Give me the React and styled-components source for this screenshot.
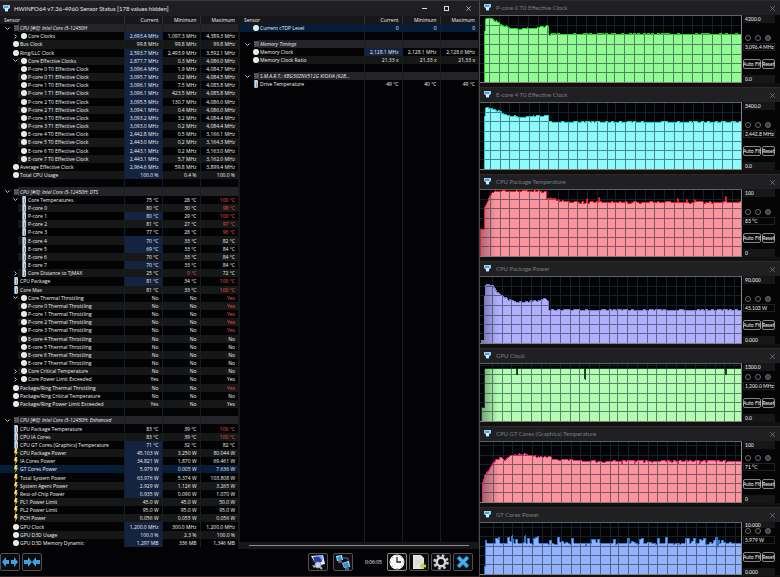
import React from 'react';
import styled, { createGlobalStyle, css } from 'styled-components';

const GlobalStyle = createGlobalStyle`
  * { box-sizing: border-box; }
  body {
    margin: 0;
    background: #0c0a0b;
    color: #f0f0f0;
    font-family: "Open Sans", "Noto Sans", sans-serif;
    font-size: 5px;
    line-height: 8px;
  }
  button, input {
    font: inherit;
    color: inherit;
    margin: 0;
    padding: 0;
  }
`;

/* ---------- data ---------- */

// [kind, level, name, current, minimum, maximum, flags]
// flags: h = changed value, r = red minimum, R = red maximum, s = selected, v / > = tree arrow
const leftRows = [
  ['group', 0, 'CPU [#0]: Intel Core i5-12450H', '', '', '', 'v'],
  ['clock', 1, 'Core Clocks', '2,693.4 MHz', '1,097.3 MHz', '4,389.3 MHz', 'h>'],
  ['clock', 0, 'Bus Clock', '99.8 MHz', '99.8 MHz', '99.8 MHz', ''],
  ['clock', 0, 'Ring/LLC Clock', '2,593.7 MHz', '2,493.9 MHz', '3,592.1 MHz', 'h'],
  ['clock', 1, 'Core Effective Clocks', '2,877.7 MHz', '0.3 MHz', '4,086.0 MHz', 'hv'],
  ['clock', 1, 'P-core 0 T0 Effective Clock', '3,096.4 MHz', '1.9 MHz', '4,084.7 MHz', 'h'],
  ['clock', 1, 'P-core 0 T1 Effective Clock', '3,095.7 MHz', '0.2 MHz', '4,084.5 MHz', 'h'],
  ['clock', 1, 'P-core 1 T0 Effective Clock', '3,096.1 MHz', '7.5 MHz', '4,085.8 MHz', 'h'],
  ['clock', 1, 'P-core 1 T1 Effective Clock', '3,096.1 MHz', '423.5 MHz', '4,085.8 MHz', 'h'],
  ['clock', 1, 'P-core 2 T0 Effective Clock', '3,095.5 MHz', '130.7 MHz', '4,086.0 MHz', 'h'],
  ['clock', 1, 'P-core 2 T1 Effective Clock', '3,094.1 MHz', '0.4 MHz', '4,086.0 MHz', 'h'],
  ['clock', 1, 'P-core 3 T0 Effective Clock', '3,093.2 MHz', '3.2 MHz', '4,084.4 MHz', 'h'],
  ['clock', 1, 'P-core 3 T1 Effective Clock', '3,093.0 MHz', '0.2 MHz', '4,084.4 MHz', 'h'],
  ['clock', 1, 'E-core 4 T0 Effective Clock', '2,442.8 MHz', '0.5 MHz', '3,166.1 MHz', 'h'],
  ['clock', 1, 'E-core 5 T0 Effective Clock', '2,443.0 MHz', '0.2 MHz', '3,164.3 MHz', 'h'],
  ['clock', 1, 'E-core 6 T0 Effective Clock', '2,443.1 MHz', '0.2 MHz', '3,163.0 MHz', 'h'],
  ['clock', 1, 'E-core 7 T0 Effective Clock', '2,443.1 MHz', '5.7 MHz', '3,162.0 MHz', 'h'],
  ['clock', 0, 'Average Effective Clock', '2,964.6 MHz', '59.8 MHz', '3,899.4 MHz', 'h'],
  ['clock', 0, 'Total CPU Usage', '100.0 %', '0.4 %', '100.0 %', 'h'],
  ['blank'],
  ['group', 0, 'CPU [#0]: Intel Core i5-12450H: DTS', '', '', '', 'v'],
  ['temp', 1, 'Core Temperatures', '75 °C', '28 °C', '100 °C', 'Rv'],
  ['temp', 1, 'P-core 0', '80 °C', '30 °C', '98 °C', 'R'],
  ['temp', 1, 'P-core 1', '80 °C', '29 °C', '100 °C', 'hR'],
  ['temp', 1, 'P-core 2', '81 °C', '27 °C', '97 °C', 'R'],
  ['temp', 1, 'P-core 3', '77 °C', '28 °C', '96 °C', 'R'],
  ['temp', 1, 'E-core 4', '70 °C', '33 °C', '82 °C', 'h'],
  ['temp', 1, 'E-core 5', '69 °C', '33 °C', '84 °C', 'h'],
  ['temp', 1, 'E-core 6', '70 °C', '33 °C', '84 °C', ''],
  ['temp', 1, 'E-core 7', '70 °C', '33 °C', '84 °C', 'h'],
  ['temp', 1, 'Core Distance to TjMAX', '25 °C', '0 °C', '72 °C', 'r>'],
  ['temp', 0, 'CPU Package', '81 °C', '34 °C', '100 °C', 'hR'],
  ['temp', 0, 'Core Max', '81 °C', '33 °C', '100 °C', 'R'],
  ['clock', 1, 'Core Thermal Throttling', 'No', 'No', 'Yes', 'Rv'],
  ['clock', 1, 'P-core 0 Thermal Throttling', 'No', 'No', 'Yes', 'R'],
  ['clock', 1, 'P-core 1 Thermal Throttling', 'No', 'No', 'Yes', 'R'],
  ['clock', 1, 'P-core 2 Thermal Throttling', 'No', 'No', 'Yes', 'R'],
  ['clock', 1, 'P-core 3 Thermal Throttling', 'No', 'No', 'Yes', 'R'],
  ['clock', 1, 'E-core 4 Thermal Throttling', 'No', 'No', 'No', ''],
  ['clock', 1, 'E-core 5 Thermal Throttling', 'No', 'No', 'No', ''],
  ['clock', 1, 'E-core 6 Thermal Throttling', 'No', 'No', 'No', ''],
  ['clock', 1, 'E-core 7 Thermal Throttling', 'No', 'No', 'No', ''],
  ['clock', 1, 'Core Critical Temperature', 'No', 'No', 'No', '>'],
  ['clock', 1, 'Core Power Limit Exceeded', 'Yes', 'No', 'Yes', '>'],
  ['clock', 0, 'Package/Ring Thermal Throttling', 'No', 'No', 'Yes', 'R'],
  ['clock', 0, 'Package/Ring Critical Temperature', 'No', 'No', 'No', ''],
  ['clock', 0, 'Package/Ring Power Limit Exceeded', 'Yes', 'No', 'Yes', ''],
  ['blank'],
  ['group', 0, 'CPU [#0]: Intel Core i5-12450H: Enhanced', '', '', '', 'v'],
  ['temp', 0, 'CPU Package Temperature', '83 °C', '39 °C', '100 °C', 'R'],
  ['temp', 0, 'CPU IA Cores', '83 °C', '39 °C', '100 °C', 'R'],
  ['temp', 0, 'CPU GT Cores (Graphics) Temperature', '71 °C', '32 °C', '82 °C', 'h'],
  ['power', 0, 'CPU Package Power', '45.103 W', '3.250 W', '80.044 W', 'h'],
  ['power', 0, 'IA Cores Power', '34.821 W', '1.870 W', '69.461 W', 'h'],
  ['power', 0, 'GT Cores Power', '5.979 W', '0.005 W', '7.636 W', 'hs'],
  ['power', 0, 'Total System Power', '63.976 W', '5.374 W', '103.808 W', 'h'],
  ['power', 0, 'System Agent Power', '2.929 W', '1.126 W', '3.265 W', 'h'],
  ['power', 0, 'Rest-of-Chip Power', '0.935 W', '0.090 W', '1.070 W', 'h'],
  ['power', 0, 'PL1 Power Limit', '45.0 W', '45.0 W', '50.0 W', ''],
  ['power', 0, 'PL2 Power Limit', '95.0 W', '95.0 W', '95.0 W', ''],
  ['power', 0, 'PCH Power', '0.056 W', '0.055 W', '0.056 W', ''],
  ['clock', 0, 'GPU Clock', '1,200.0 MHz', '300.0 MHz', '1,200.0 MHz', 'h'],
  ['clock', 0, 'GPU D3D Usage', '100.0 %', '2.3 %', '100.0 %', 'h'],
  ['clock', 0, 'GPU D3D Memory Dynamic', '1,297 MB', '336 MB', '1,346 MB', 'h'],
];

const rightRows = [
  ['clock', 0, 'Current cTDP Level', '0', '0', '0', 's'],
  ['blank'],
  ['group', 0, 'Memory Timings', '', '', '', 'v'],
  ['clock', 0, 'Memory Clock', '2,128.1 MHz', '2,128.1 MHz', '2,128.6 MHz', 'h'],
  ['clock', 0, 'Memory Clock Ratio', '21.33 x', '21.33 x', '21.33 x', ''],
  ['blank'],
  ['group', 0, 'S.M.A.R.T.: KBG50ZNV512G KIOXIA (92B...', '', '', '', 'v'],
  ['temp', 0, 'Drive Temperature', '49 °C', '40 °C', '49 °C', ''],
];

// points are [x, y from the top], straight lines in between
const graphs = [
  {
    title: 'P-core 0 T0 Effective Clock', max: '4200.0', now: '3,096.4 MHz', min: '0.0',
    size: 87, height: 68, grid: 9, fill: '#92fb92', line: '#1fd81f', start: 5, noise: 1, up: 1,
    points: [[5, 15], [6, 3], [12, 3], [18, 8], [25, 11], [31, 13], [41, 14], [51, 13], [61, 12], [68, 11], [69, 20], [71, 19], [262, 19]],
  },
  {
    title: 'E-core 4 T0 Effective Clock', max: '3400.0', now: '2,442.8 MHz', min: '0.0',
    size: 87, height: 68, grid: 10, fill: '#8dfbfb', line: '#22cfcf', start: 5, noise: 1, up: 1,
    points: [[5, 13], [6, 5], [12, 6], [18, 9], [25, 12], [31, 14], [44, 15], [60, 14], [68, 14], [69, 20], [262, 20]],
  },
  {
    title: 'CPU Package Temperature', max: '100', now: '83 °C', min: '0',
    size: 87, height: 68, grid: 10, fill: '#fc939d', line: '#ee1d2b', start: 0, noise: 2, up: 1, fade: true,
    points: [[0, 41], [4, 41], [5, 17], [7, 13], [9, 8], [12, 3], [15, 2], [66, 2], [67, 9], [75, 10], [80, 12], [87, 13], [262, 13]],
    marks: [[107, 9], [119, 8], [198, 9], [207, 10], [215, 10], [246, 7]],
  },
  {
    title: 'CPU Package Power', max: '90.000', now: '45.103 W', min: '0.000',
    size: 87, height: 68, grid: 12, fill: '#b1affd', line: '#7a78cf', start: 2, noise: 1, up: 1, fade: true,
    points: [[2, 65], [4, 65], [5, 20], [6, 8], [13, 9], [15, 13], [18, 17], [23, 20], [28, 24], [38, 26], [45, 26], [56, 25], [66, 23], [68, 25], [69, 34], [262, 34]],
  },
  {
    title: 'GPU Clock', max: '1300.0', now: '1,200.0 MHz', min: '0.0',
    size: 78, height: 59, grid: 12, fill: '#b2fdb0', line: '#1c3f22', start: 2, noise: 0, up: 0, fade: true,
    points: [[2, 45], [4, 45], [5, 5], [262, 5]],
    marks: [[37, 11], [105, 16], [246, 11]],
  },
  {
    title: 'CPU GT Cores (Graphics) Temperature', max: '100', now: '71 °C', min: '0',
    size: 81, height: 62, grid: 13, fill: '#fc939d', line: '#e2247a', start: 3, noise: 2, up: 1, fade: true,
    points: [[3, 41], [5, 34], [8, 30], [10, 27], [13, 22], [16, 19], [20, 17], [26, 18], [30, 14], [46, 13], [50, 14], [62, 16], [70, 16], [74, 19], [90, 19], [96, 20], [262, 20]],
    marks: [[142, 23], [155, 22], [198, 23], [220, 23]],
  },
  {
    title: 'GT Cores Power', max: '10.000', now: '5.979 W', min: '0.000',
    size: 70, height: 53, grid: 13, fill: '#94b1fb', line: '#2b7ed6', start: 5, noise: 6, up: 6,
    points: [[5, 45], [6, 18], [7, 21], [262, 21]],
    marks: [[19, 15], [32, 13], [45, 13], [58, 14], [106, 24], [238, 25]],
  },
];

/* ---------- window ---------- */

const Desktop = styled.div`
  display: grid;
  grid-template-columns: 480fr 300fr;
  height: 100vh;
  overflow: hidden;
`;

const MainWindow = styled.main`
  display: flex;
  flex-direction: column;
  min-width: 0;
  min-height: 0;
  background: #030306;
  border-top: 1px solid #3b3837;
  border-right: 1px solid #4b4948;
  border-bottom: 1px solid #3a2120;
`;

const TitleBar = styled.header`
  display: flex;
  align-items: center;
  height: 15px;
  padding-left: 3px;
  background: #1f1f23;
  color: #e6e6e6;
`;

const Title = styled.h1`
  flex: 1;
  margin: 0 0 0 3px;
  font-family: Lato, "Open Sans", sans-serif;
  font-size: 6px;
  font-weight: 400;
  white-space: nowrap;
`;

const GraphTitle = styled(Title)`
  margin-left: 4px;
`;

const WindowButton = styled.button`
  display: flex;
  align-items: center;
  justify-content: center;
  width: ${p => (p.$small ? '16px' : '22px')};
  height: 14px;
  border: 0;
  background: none;
  color: ${p => (p.$small ? '#8a8a8e' : '#dcdcdc')};
`;

const Panels = styled.div`
  display: flex;
  flex: 1;
  min-height: 0;
`;

const Panel = styled.section`
  flex: 1;
  display: flex;
  flex-direction: column;
  min-width: 0;
  border-right: ${p => (p.$tree ? '2px' : '1px')} solid #17181b;
  padding-bottom: ${p => (p.$tree ? '2px' : '0')};
`;

const SensorTable = styled.table`
  width: 100%;
  flex: 1;
  height: 100%;
  table-layout: fixed;
  border-collapse: collapse;
`;

const NumberCol = styled.col`
  width: 38px;
`;

const HeadCell = styled.th`
  height: 8px;
  padding: 0 3px;
  background: #17171a;
  border-left: 1px solid #2a3036;
  font-weight: 400;
  line-height: 8px;
  text-align: right;
  &:first-child {
    border-left: 0;
    padding-left: 4px;
    text-align: left;
  }
`;

const Cell = styled.td`
  height: 8px;
  padding: 0 3px 0 0;
  border-left: 1px solid #131e27;
  line-height: 8px;
  text-align: right;
  white-space: nowrap;
  color: ${p => (p.$red ? '#f0544b' : 'inherit')};
  background: ${p => (p.$hot ? '#14233f' : 'none')};
  &:first-child {
    border-left: 0;
    padding: 0;
  }
`;

const Row = styled.tr`
  ${p => p.$alt && css`background: linear-gradient(90deg, #030306 18px, #161817 18px);`}
  ${p => p.$group && css`background: linear-gradient(90deg, #030306 18px, #232328 18px);`}
  ${p => p.$selected && css`background: #061d38;`}
`;

const FillerRow = styled.tr`
  height: 100%;
`;

const Name = styled.div`
  display: flex;
  align-items: center;
  height: 8px;
  padding-left: ${p => (p.$level ? '11px' : '3px')};
  font-style: ${p => (p.$group ? 'italic' : 'normal')};
  overflow: hidden;
`;

const Slot = styled.span`
  display: flex;
  flex: none;
  justify-content: center;
  width: ${p => (p.$wide ? '9px' : '8px')};
`;

const TreeButton = styled.button`
  display: flex;
  align-items: center;
  justify-content: center;
  width: 8px;
  height: 8px;
  border: 0;
  background: none;
`;

const ScrollBar = styled.div`
  height: 7px;
  padding: 3px 9px;
  background: #17181a;
`;

const ScrollThumb = styled.div`
  height: 1px;
  background: #8b8b8b;
`;

const Toolbar = styled.footer`
  display: flex;
  align-items: center;
  gap: 2px;
  height: 27px;
  padding: 0 6px 2px 0;
  background: #030306;
`;

const ToolButton = styled.button`
  display: flex;
  align-items: center;
  justify-content: center;
  width: 20px;
  height: 18px;
  border: 1px solid ${p => (p.$light ? '#8a8a8a' : '#515153')};
  border-radius: 2px;
  background: #0c0c0e;
`;

const Elapsed = styled.time`
  min-width: 20px;
  margin-left: 10px;
`;

const Spacer = styled.span`
  flex: ${p => (p.$grow ? '1' : '0 0 1px')};
`;

/* ---------- graph windows ---------- */

const GraphStack = styled.div`
  display: grid;
  grid-template-rows: ${graphs.map(g => `minmax(0, ${g.size}fr)`).join(' ')};
  min-width: 0;
  min-height: 0;
`;

const GraphWindow = styled.section`
  display: flex;
  flex-direction: column;
  min-height: 0;
  padding-bottom: ${p => (p.$last ? '2px' : '4px')};
  background: #15100f;
`;

const GraphTitleBar = styled(TitleBar)`
  flex: none;
  padding-left: 4px;
  border-top: 1px solid #2b2b2e;
  background: #202023;
  color: #7b7c80;
`;

const GraphBody = styled.div`
  display: flex;
  flex: 1;
  min-height: 0;
  background: #050506;
`;

const Plot = styled.svg`
  display: block;
  flex: 1;
  min-width: 0;
  height: 100%;
  border-top: 1px solid #5d6265;
  border-right: 1px solid #85898a;
  border-bottom: 1px solid #7c8082;
`;

const Controls = styled.div`
  display: flex;
  flex-direction: column;
  width: 38px;
  padding: 0 5px 0 1px;
  font-family: Lato, "Open Sans", sans-serif;
`;

const Scale = styled.input`
  width: 100%;
  height: 8px;
  min-height: 6px;
  flex-shrink: ${p => (p.$top ? '1' : '0')};
  margin-bottom: ${p => (p.$top ? 'auto' : '0')};
  padding-left: 2px;
  border: 0;
  background: #161718;
  line-height: 8px;
`;

const Reading = styled.output`
  flex: none;
  height: 8px;
  margin: 2px 0 8px;
  padding-left: 1px;
  border: 1px solid #222226;
  line-height: 6px;
  white-space: nowrap;
`;

const Colours = styled.div`
  display: flex;
  flex: none;
  gap: 4px;
  padding-left: 2px;
`;

const Dot = styled.input`
  appearance: none;
  width: 6px;
  height: 6px;
  border: 1px solid #66686b;
  border-radius: 50%;
  background: ${p => (p.$on ? '#2f4260' : 'none')};
`;

const Buttons = styled.div`
  display: flex;
  flex: none;
  gap: 1px;
  margin-bottom: 6px;
`;

const SmallButton = styled.button`
  flex: ${p => (p.$wide ? '18' : '13')} 0 0;
  min-width: 0;
  height: 10px;
  border: 1px solid #858588;
  border-radius: 2px;
  background: #0b0b0c;
  line-height: 8px;
  white-space: nowrap;
  display: flex;
  justify-content: center;
`;

/* ---------- icons ---------- */

const AppIcon = () => (
  <svg width="8" height="8" viewBox="0 0 8 8" aria-hidden="true">
    <path d="M0 0h7v3L5 4.500H2L0 3z" fill="#9bd0ee" />
    <rect x="1" y="1" width="4" height="2" fill="#4b9fd6" />
    <rect x="2" y="3" width="3" height="4" fill="#dfeaf1" />
    <rect x="2" y="6" width="3" height="1" fill="#2d80bd" />
  </svg>
);

const Chevron = ({ open }) => (
  <svg width="5" height="5" viewBox="0 0 5 5" fill="none" stroke="#c4c4c4" aria-hidden="true">
    <path d={open ? 'M.5 1.5 2.5 3.5 4.5 1.5' : 'M1.5 .5 3.5 2.5 1.5 4.5'} />
  </svg>
);

const icons = {
  group: (
    <svg width="6" height="8" viewBox="0 0 6 8">
      <rect x="1" y="1" width="5" height="6" fill="#4a4a4a" />
      <path d="M1 2.5h5M1 4.5h5" stroke="#6b6b6b" strokeWidth=".7" />
    </svg>
  ),
  clock: (
    <svg width="6" height="8" viewBox="0 0 6 8">
      <circle cx="3" cy="4" r="3" fill="#efefec" />
      <path d="M3 3v1.300h1" stroke="#c4c4c0" strokeWidth=".6" fill="none" />
    </svg>
  ),
  temp: (
    <svg width="6" height="8" viewBox="0 0 6 8">
      <rect x="1" y="0" width="4" height="8" rx="1.400" fill="#c3dcea" />
      <path d="M3.500 2.500v4.500" stroke="#d07a62" />
      <path d="M1.500 1v6" stroke="#6ca8d0" />
    </svg>
  ),
  power: (
    <svg width="6" height="8" viewBox="0 0 6 8">
      <path d="M2 0h2.6L3.7 2.8H5L2 8l.6-3.7H1z" fill="#f5c93c" />
      <path d="M2.4 .4h1L2.5 3.6H1.6z" fill="#fff0a6" />
    </svg>
  ),
};

const CloseIcon = () => (
  <svg width="5" height="5" viewBox="0 0 5 5" stroke="currentColor" strokeWidth=".7" aria-hidden="true">
    <path d="M.3.3l4.4 4.4M4.7.3.3 4.7" />
  </svg>
);

const Arrows = ({ inward }) => (
  <svg width="18" height="10" viewBox="0 0 18 10" fill="#3f9fe2" aria-hidden="true">
    {inward ? (
      <path d="M1 3h4V0l4 5-4 5V7H1zM17 3h-4V0L9 5l4 5V7h4z" />
    ) : (
      <path d="M1 5l4-5v3h3v4H5v3zM17 5l-4-5v3h-3v4h3v3z" />
    )}
  </svg>
);

const toolIcons = {
  'Sensor settings': (
    <svg width="16" height="16" viewBox="0 0 16 16">
      <path d="M1 2l12-1 2 9-8 2z" fill="#e6ebf3" />
      <path d="M3 3l8-1 1 6-7 1z" fill="#243cae" />
      <path d="M8 2l4-1 1 6z" fill="#7f9af2" />
      <circle cx="8" cy="11" r="3" fill="#ccd3df" stroke="#99a3b4" />
      <path d="M10 13l2 2" stroke="#a7afba" strokeWidth="2" />
      <path d="M2 11l4 1-2 2z" fill="#b9bdc6" />
    </svg>
  ),
  'Remote monitoring': (
    <svg width="16" height="16" viewBox="0 0 16 16">
      <path d="M8 4h5v4" stroke="#6b7278" fill="none" />
      <path d="M1 2l6-1 1 5-6 1z" fill="#bfe2f6" />
      <path d="M2 3l4-1 1 4-4 .5z" fill="#2a93dd" />
      <path d="M7 9l7-2 1 6-6 1z" fill="#bfe2f6" />
      <path d="M8 9.500l5-1.500 1 5-5 .5z" fill="#2a93dd" />
      <path d="M3 8h4M10 15h4" stroke="#9fb6c4" />
    </svg>
  ),
  'Reset clock': (
    <svg width="16" height="16" viewBox="0 0 16 16">
      <circle cx="8" cy="8" r="7.5" fill="#f6f6f4" />
      <path d="M8 3v5h4" stroke="#222" strokeWidth="1.3" fill="none" />
      <path d="M8 1v1M8 14v1M1 8h1M14 8h1M3 3l.7.7M13 3l-.7.7M3 13l.7-.7M13 13l-.7-.7" stroke="#777" />
    </svg>
  ),
  'Start logging': (
    <svg width="16" height="16" viewBox="0 0 16 16">
      <path d="M2 1h8l3 3v11H2z" fill="#e3e4e2" />
      <path d="M4 4h5M4 6h7M4 8h7M4 10h5" stroke="#d0d1cf" strokeWidth=".6" />
      <path d="M12 9v6M9 12h6" stroke="#b4d65a" strokeWidth="2.400" />
    </svg>
  ),
  Settings: (
    <svg width="16" height="16" viewBox="0 0 16 16">
      <circle cx="8" cy="8" r="6.3" fill="none" stroke="#c6cace" strokeWidth="3" strokeDasharray="2.5 2.45" />
      <circle cx="8" cy="8" r="4.200" fill="none" stroke="#d2d5d8" strokeWidth="2.500" />
    </svg>
  ),
  Close: (
    <svg width="16" height="16" viewBox="0 0 16 16">
      <path d="M3 3l10 10M13 3L3 13" stroke="#2474ad" strokeWidth="4" />
      <path d="M3.500 3.500l9 9M12.500 3.500l-9 9" stroke="#45aee9" strokeWidth="2.600" />
    </svg>
  ),
};

/* ---------- parts ---------- */

function SensorRow({ row, index }) {
  const [kind, level, name, current, minimum, maximum, flags = ''] = row;
  if (kind === 'blank') {
    return <Row><Cell /><Cell /><Cell /><Cell /></Row>;
  }
  const open = flags.includes('v');
  const selected = flags.includes('s');
  return (
    <Row $alt={index % 2 === 0} $group={kind === 'group'} $selected={selected}>
      <Cell>
        <Name $level={level} $group={kind === 'group'}>
          <Slot>
            {(open || flags.includes('>')) && (
              <TreeButton aria-expanded={open} aria-label={name}><Chevron open={open} /></TreeButton>
            )}
          </Slot>
          <Slot $wide>{icons[kind]}</Slot>
          {name}
        </Name>
      </Cell>
      <Cell $hot={flags.includes('h')}>{current}</Cell>
      <Cell $red={flags.includes('r')}>{minimum}</Cell>
      <Cell $red={flags.includes('R')}>{maximum}</Cell>
    </Row>
  );
}

function Sensors({ rows, filler }) {
  return (
    <SensorTable>
      <colgroup>
        <col />
        <NumberCol /><NumberCol /><NumberCol />
      </colgroup>
      <thead>
        <tr>
          <HeadCell>Sensor</HeadCell>
          <HeadCell>Current</HeadCell>
          <HeadCell>Minimum</HeadCell>
          <HeadCell>Maximum</HeadCell>
        </tr>
      </thead>
      <tbody>
        {rows.map((row, i) => <SensorRow key={i} row={row} index={i} />)}
        {filler && <FillerRow><Cell /><Cell /><Cell /><Cell /></FillerRow>}
      </tbody>
    </SensorTable>
  );
}

// one height for every pixel column, the wobble repeats the same on each load
function buildSeries({ points, start, noise, up, marks = [] }, seed) {
  let s = seed * 7919 + 13;
  const random = () => {
    s = (s * 1103515245 + 12345) % 2147483648;
    return s / 2147483648;
  };
  const series = [];
  let wobble = 0;
  for (let x = start; x < 262; x++) {
    const n = points.findIndex(p => p[0] > x);
    const [x0, y0] = points[n - 1] || points[0];
    const [x1, y1] = points[n] || points[points.length - 1];
    if (x % 2 === 0) {
      const r = random();
      wobble = r > 0.62 ? -Math.ceil(random() * up) : 0;
      if (noise > 1 && r < 0.1) wobble = 1;
    }
    const flat = x > 14 ? wobble : 0;
    const mark = marks.find(m => m[0] === x);
    series.push([x, mark ? mark[1] : Math.round(y0 + ((y1 - y0) * (x - x0)) / (x1 - x0)) + flat]);
  }
  return series;
}

function Graph({ graph, seed }) {
  const { height, fill, line, start, grid, fade } = graph;
  const top = buildSeries(graph, seed).map(([x, y]) => `L${x} ${Math.max(1, y)}H${x + 1}`).join('');
  const area = `M${start} ${height}${top}V${height}Z`;
  let lines = '';
  for (let x = grid; x < 262; x += 9.72) lines += `M${Math.round(x)} 0h1v${height}h-1z`;
  for (let y = height - 10; y > 0; y -= 9.7) lines += `M0 ${Math.round(y)}h262v1h-262z`;
  const id = `g${seed}`;
  return (
    <Plot viewBox={`0 0 262 ${height}`} preserveAspectRatio="none" shapeRendering="crispEdges" role="img" aria-label={graph.title}>
      <defs>
        <clipPath id={id}><path d={area} /></clipPath>
        <linearGradient id={`${id}f`}>
          <stop offset="0" stopColor="#20202c" stopOpacity=".4" />
          <stop offset="1" stopColor="#20202c" stopOpacity="0" />
        </linearGradient>
      </defs>
      <rect width="262" height={height} fill="#030306" />
      <path d={lines} fill="#10212b" />
      <path d={area} fill={fill} />
      {fade && <rect x={start} width="16" height={height} fill={`url(#${id}f)`} clipPath={`url(#${id})`} />}
      <path d={lines} fill="#263a48" fillOpacity=".62" clipPath={`url(#${id})`} />
      <path d={`M${start} ${height}${top}`} fill="none" stroke={line} />
    </Plot>
  );
}

function GraphPane({ graph, seed, last }) {
  return (
    <GraphWindow $last={last}>
      <GraphTitleBar>
        <AppIcon />
        <GraphTitle as="h2">{graph.title}</GraphTitle>
        <WindowButton $small aria-label={`Close ${graph.title}`}><CloseIcon /></WindowButton>
      </GraphTitleBar>
      <GraphBody>
        <Graph graph={graph} seed={seed} />
        <Controls>
          <Scale $top aria-label="Scale maximum" defaultValue={graph.max} />
          <Colours>
            <Dot type="radio" name={`c${seed}`} aria-label="Background" />
            <Dot type="radio" name={`c${seed}`} aria-label="Grid" />
            <Dot type="radio" name={`c${seed}`} aria-label="Line" $on defaultChecked />
          </Colours>
          <Reading>{graph.now}</Reading>
          <Buttons>
            <SmallButton $wide>Auto Fit</SmallButton>
            <SmallButton>Reset</SmallButton>
          </Buttons>
          <Scale aria-label="Scale minimum" defaultValue={graph.min} />
        </Controls>
      </GraphBody>
    </GraphWindow>
  );
}

const Tool = ({ name, light }) => (
  <ToolButton aria-label={name} $light={light}>{toolIcons[name]}</ToolButton>
);

export default function App() {
  return (
    <Desktop>
      <GlobalStyle />
      <MainWindow>
        <TitleBar>
          <AppIcon />
          <Title>HWiNFO64 v7.36-4960 Sensor Status [178 values hidden]</Title>
          <WindowButton aria-label="Minimize">
            <svg width="5" height="5" viewBox="0 0 5 5" stroke="currentColor"><path d="M0 2.500h5" /></svg>
          </WindowButton>
          <WindowButton aria-label="Maximize">
            <svg width="5" height="5" viewBox="0 0 5 5" stroke="currentColor" fill="none"><rect x=".5" y=".5" width="4" height="4" /></svg>
          </WindowButton>
          <WindowButton aria-label="Close"><CloseIcon /></WindowButton>
        </TitleBar>
        <Panels>
          <Panel $tree><Sensors rows={leftRows} /></Panel>
          <Panel>
            <Sensors rows={rightRows} filler />
            <ScrollBar><ScrollThumb /></ScrollBar>
          </Panel>
        </Panels>
        <Toolbar>
          <ToolButton aria-label="Expand columns"><Arrows /></ToolButton>
          <ToolButton aria-label="Shrink columns"><Arrows inward /></ToolButton>
          <Spacer $grow />
          <Tool name="Sensor settings" />
          <Spacer />
          <Tool name="Remote monitoring" />
          <Elapsed>0:06:05</Elapsed>
          <Tool name="Reset clock" light />
          <Tool name="Start logging" />
          <Tool name="Settings" />
          <Tool name="Close" />
        </Toolbar>
      </MainWindow>
      <GraphStack>
        {graphs.map((g, i) => (
          <GraphPane key={g.title} graph={g} seed={i + 1} last={i === graphs.length - 1} />
        ))}
      </GraphStack>
    </Desktop>
  );
}
